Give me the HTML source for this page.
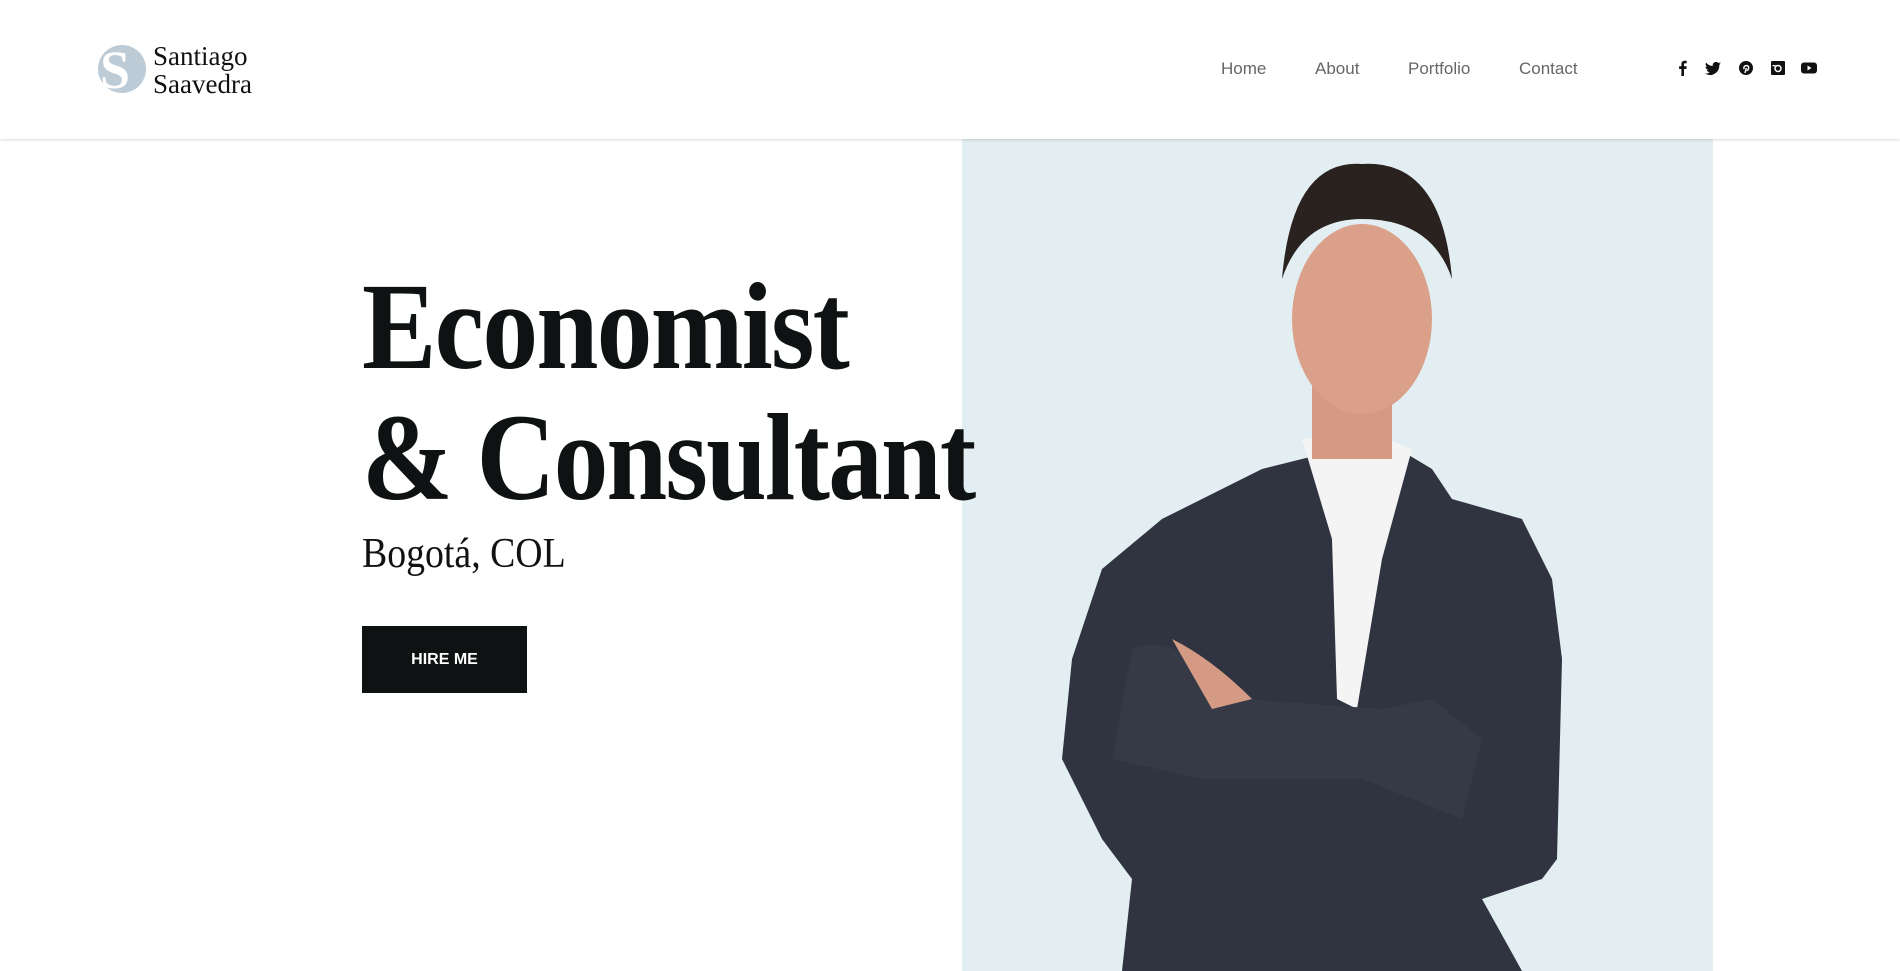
<!DOCTYPE html>
<html><head><meta charset="utf-8"><style>
*{margin:0;padding:0;box-sizing:border-box}
body{width:1900px;height:971px;overflow:hidden;background:#fff;font-family:"Liberation Sans",sans-serif;position:relative}
.hdr{position:absolute;left:0;top:0;width:1900px;height:139px;background:#fff;box-shadow:0 1px 3px rgba(0,0,0,.15);z-index:2}
.logo{position:absolute;left:98px;top:45px;width:48px;height:48px;border-radius:50%;background:#bccbd6;overflow:hidden}
.logo span{position:absolute;left:2px;top:-6px;font:bold 54px "Liberation Serif",serif;color:#fff}
.lt{position:absolute;left:153px;top:42px;font:27px/28px "Liberation Serif",serif;color:#111;transform:scaleX(1);transform-origin:left}
.nav a{position:absolute;top:59px;font-size:17px;color:#666;text-decoration:none}
.ic{position:absolute;top:60px;width:16px;height:16px}
.photo{position:absolute;left:962px;top:139px;width:751px;height:832px;background:#e2eef2}
h1{position:absolute;left:362px;font:bold 124px/1 "Liberation Serif",serif;color:#0f1212;transform-origin:left;white-space:nowrap;letter-spacing:-2px}
.loc{position:absolute;left:362px;top:530px;font:42px "Liberation Serif",serif;color:#111;transform:scaleX(.9);transform-origin:left}
.btn{position:absolute;left:362px;top:626px;width:165px;height:67px;background:#0f1212;color:#fff;font-size:16px;font-weight:bold;text-align:center;line-height:67px}
</style></head><body>
<div class="photo"></div>
<svg style="position:absolute;left:962px;top:139px" width="751" height="832" viewBox="0 0 751 832">
<path d="M300 330 L420 300 L470 330 L490 360 L560 380 L590 440 L600 520 L595 720 L580 740 L520 760 L560 832 L160 832 L170 740 L140 700 L100 620 L110 520 L140 430 L200 380 Z" fill="#2f3440"/>
<path d="M340 300 L370 400 L375 560 L395 570 L420 420 L450 310 L400 290 Z" fill="#f4f4f4"/>
<rect x="350" y="240" width="80" height="80" fill="#d49a84"/>
<ellipse cx="400" cy="180" rx="70" ry="95" fill="#dba08a"/>
<path d="M320 140 Q330 20 400 25 Q480 20 490 140 Q470 80 400 80 Q340 80 320 140Z" fill="#2a221e"/>
<path d="M170 510 Q210 490 280 560 L420 570 L470 560 L520 600 L500 680 L400 640 L240 640 L150 620 Z" fill="#353a46"/>
<path d="M210 500 Q250 520 290 560 L250 570 Z" fill="#d49a84"/>
</svg>
<div class="hdr">
<div class="logo"><span>S</span></div>
<div class="lt">Santiago<br>Saavedra</div>
<div class="nav"><a style="left:1221px">Home</a><a style="left:1315px">About</a><a style="left:1408px">Portfolio</a><a style="left:1519px">Contact</a></div>
<svg class="ic" style="left:1675px" viewBox="0 0 16 16"><path d="M9 16V9h2.3l.4-2.7H9V4.6c0-.8.2-1.3 1.3-1.3h1.4V.9C11.4.9 10.6.8 9.700.8 7.7.8 6.4 2 6.4 4.3v2H4.1V9h2.3v7z" fill="#111"/></svg>
<svg class="ic" style="left:1705px" viewBox="0 0 16 16"><path d="M16 3.5c-.6.3-1.2.4-1.9.5.7-.4 1.2-1 1.4-1.8-.6.4-1.3.6-2.1.8A3.3 3.3 0 0 0 7.8 6 9.300 9.300 0 0 1 1.1 2.6a3.300 3.300 0 0 0 1 4.4c-.5 0-1-.2-1.5-.4 0 1.6 1.1 2.9 2.6 3.2-.5.1-1 .2-1.5.1.4 1.3 1.6 2.3 3.1 2.3A6.6 6.6 0 0 1 0 13.5 9.3 9.3 0 0 0 14.3 5.2V4.8c.7-.4 1.2-1 1.7-1.3z" fill="#111"/></svg>
<svg class="ic" style="left:1738px" viewBox="0 0 16 16"><circle cx="8" cy="8" r="7" fill="#111"/><path d="M7 13l1.2-5M8.5 10.5c2.5 0 3-4.5.3-4.9-2.5-.3-3.6 2.2-2.5 3.4" stroke="#fff" stroke-width="1.4" fill="none"/></svg>
<svg class="ic" style="left:1770px" viewBox="0 0 16 16"><rect x="1" y="1" width="14" height="14" rx="1" fill="#111"/><circle cx="8" cy="8.5" r="3" fill="none" stroke="#fff" stroke-width="1.5"/><rect x="2.5" y="5" width="3" height="1.3" fill="#fff"/></svg>
<svg class="ic" style="left:1801px" viewBox="0 0 16 16"><rect x="0" y="2.5" width="16" height="11" rx="3" fill="#111"/><path d="M6.5 5.5v5l4-2.5z" fill="#fff"/></svg>
</div>
<h1 style="top:265px;transform:scaleX(.9)">Economist</h1>
<h1 style="top:396px;transform:scaleX(.88)">&amp; Consultant</h1>
<div class="loc">Bogotá, COL</div>
<div class="btn">HIRE ME</div>
</body></html>
